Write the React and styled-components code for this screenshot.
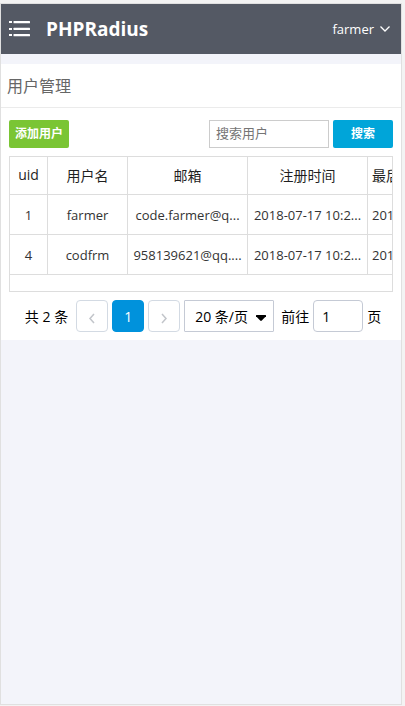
import React from "react";
import styled, { createGlobalStyle } from "styled-components";

const GlobalStyle = createGlobalStyle`
  * { box-sizing: border-box; }
  html, body { margin: 0; background: #f3f3f3; }
  body, button, input, select {
    font-family: "Open Sans", "Noto Sans CJK SC", sans-serif;
  }
  body { font-size: 14px; color: #000; }
`;

const Screen = styled.div`
  display: flex;
  flex-direction: column;
  min-height: calc(100vh - 4px);
  margin: 3px 3px 1px 0;
  border: 1px solid #e0e0e0;
  background: #f3f4fa;
`;

const Header = styled.header`
  display: flex;
  align-items: center;
  height: 50px;
  padding: 0 10px 0 8px;
  background: #545964;
  color: #fff;
`;

const IconButton = styled.button`
  display: flex;
  padding: 0;
  border: 0;
  background: none;
  color: inherit;
`;

const Brand = styled.h1`
  flex: 1;
  margin: 0 0 0 16px;
  font-size: 19px;
  line-height: 24px;
  font-weight: 700;
`;

const AccountButton = styled(IconButton)`
  align-items: center;
  gap: 5px;
  font-size: 13px;
  line-height: 20px;
`;

const Panel = styled.main`
  margin-top: 10px;
  padding-bottom: 8px;
  background: #fff;
`;

const PanelTitle = styled.h2`
  margin: 0;
  padding: 10px 6px 9px;
  border-bottom: 1px solid #ebebeb;
  color: #666;
  font-size: 16px;
  line-height: 24px;
  font-weight: 400;
`;

const Toolbar = styled.form`
  display: flex;
  gap: 4px;
  padding: 12px 8px 8px;
`;

const ActionButton = styled.button`
  width: 60px;
  height: 28px;
  padding: 0 0 2px;
  border: 0;
  border-radius: 2px;
  background: ${(p) => (p.$tone === "green" ? "#7ac534" : "#00a5d9")};
  color: #fff;
  font-size: 12px;
  font-weight: 700;
  margin-right: ${(p) => (p.$lead ? "auto" : "0")};
`;

const SearchInput = styled.input`
  width: 120px;
  height: 28px;
  padding: 0 6px 2px;
  border: 1px solid #ccc;
  background: #fff;
  font-size: 13px;
  &::placeholder { color: #757575; opacity: 1; }
`;

const TableFrame = styled.div`
  margin: 0 8px;
  padding-bottom: 16px;
  border: 1px solid #ddd;
  overflow: hidden;
`;

const Table = styled.table`
  width: 477px;
  table-layout: fixed;
  border-collapse: separate;
  border-spacing: 0;
`;

const Column = styled.col`
  width: ${(p) => p.$width}px;
`;

const cell = `
  padding: 0 4px;
  border-right: 1px solid #ddd;
  border-bottom: 1px solid #ddd;
  text-align: center;
  white-space: nowrap;
  overflow: hidden;
`;

const HeadCell = styled.th`
  ${cell}
  height: 38px;
  padding-bottom: 2px;
  color: #1f1f1f;
  font-size: 14px;
  font-weight: 400;
  text-align: ${(p) => (p.$start ? "left" : "center")};
`;

const BodyCell = styled.td`
  ${cell}
  height: 40px;
  color: #333;
  font-size: 13px;
  text-align: ${(p) => (p.$start ? "left" : "center")};
`;

const Pagination = styled.nav`
  display: flex;
  justify-content: center;
  align-items: center;
  gap: 4px;
  padding: 8px 0 0 4px;
  white-space: nowrap;
`;

const Total = styled.span`
  margin-right: 4px;
`;

const PageButton = styled.button`
  display: flex;
  align-items: center;
  justify-content: center;
  width: 32px;
  height: 32px;
  padding: 0;
  border: 1px solid ${(p) => (p.$active ? "#0092dc" : "#d3dae3")};
  border-radius: 4px;
  background: ${(p) => (p.$active ? "#0092dc" : "#fff")};
  color: ${(p) => (p.$active ? "#fff" : "#c2c5ca")};
  font-size: 14px;
  & > svg { margin-top: 4px; }
`;

const SelectBox = styled.span`
  display: grid;
  align-items: center;
  width: 90px;
  & > * { grid-area: 1 / 1; }
  & > svg { justify-self: end; margin: 3px 8px 0 0; pointer-events: none; }
`;

const PageSize = styled.select`
  width: 100%;
  height: 32px;
  padding: 0 20px 0 10px;
  appearance: none;
  border: 1px solid #c5cad5;
  border-radius: 1px;
  background: #fff;
  color: #000;
  font-size: 14px;
`;

const JumpLabel = styled.label`
  display: flex;
  align-items: center;
  gap: 4px;
  margin-left: 3px;
`;

const JumpInput = styled.input`
  width: 50px;
  height: 32px;
  padding: 0 8px;
  border: 1px solid #c5cad5;
  border-radius: 4px;
  background: #fff;
  color: #000;
  font-size: 14px;
`;

const ListIcon = () => (
  <svg width="21" height="16" viewBox="0 0 21 16" fill="currentColor" aria-hidden="true">
    <rect x="0" y="0" width="3" height="2" />
    <rect x="0" y="7" width="3" height="2" />
    <rect x="0" y="13" width="3" height="2" />
    <rect x="4.5" y="0" width="16.5" height="2.2" rx=".5" />
    <rect x="4.5" y="6.8" width="16.5" height="2.2" rx=".5" />
    <rect x="4.5" y="13" width="16.5" height="2.2" rx=".5" />
  </svg>
);

const Chevron = ({ d, width, height, stroke = 1.5 }) => (
  <svg width={width} height={height} viewBox={`0 0 ${width} ${height}`} fill="none" stroke="currentColor" strokeWidth={stroke} aria-hidden="true">
    <path d={d} />
  </svg>
);

const columns = [
  { title: "uid", width: 38 },
  { title: "用户名", width: 80 },
  { title: "邮箱", width: 120 },
  { title: "注册时间", width: 120 },
  { title: "最后登录时间", width: 119, start: true },
];

const users = [
  ["1", "farmer", "code.farmer@q...", "2018-07-17 10:2...", "2018-07-17 10:2..."],
  ["4", "codfrm", "958139621@qq....", "2018-07-17 10:2...", "2018-07-17 10:2..."],
];

export default function App() {
  return (
    <>
      <GlobalStyle />
      <Screen>
        <Header>
          <IconButton type="button" aria-label="菜单">
            <ListIcon />
          </IconButton>
          <Brand>PHPRadius</Brand>
          <AccountButton type="button">
            farmer
            <Chevron d="M1.5 1.5L6 6l4.500-4.500" width={12} height={8} stroke={1.3} />
          </AccountButton>
        </Header>
        <Panel>
          <PanelTitle>用户管理</PanelTitle>
          <Toolbar onSubmit={(e) => e.preventDefault()}>
            <ActionButton type="button" $tone="green" $lead>添加用户</ActionButton>
            <SearchInput type="text" placeholder="搜索用户" aria-label="搜索用户" />
            <ActionButton type="submit">搜索</ActionButton>
          </Toolbar>
          <TableFrame>
            <Table>
              <colgroup>
                {columns.map((c) => <Column key={c.title} $width={c.width} />)}
              </colgroup>
              <thead>
                <tr>
                  {columns.map((c) => (
                    <HeadCell key={c.title} scope="col" $start={c.start}>{c.title}</HeadCell>
                  ))}
                </tr>
              </thead>
              <tbody>
                {users.map((row) => (
                  <tr key={row[0]}>
                    {row.map((value, i) => (
                      <BodyCell key={columns[i].title} $start={columns[i].start}>{value}</BodyCell>
                    ))}
                  </tr>
                ))}
              </tbody>
            </Table>
          </TableFrame>
          <Pagination aria-label="分页">
            <Total>共 2 条</Total>
            <PageButton type="button" aria-label="上一页" disabled>
              <Chevron d="M6 1L2 5.500 6 10" width={8} height={11} />
            </PageButton>
            <PageButton type="button" $active aria-current="page">1</PageButton>
            <PageButton type="button" aria-label="下一页" disabled>
              <Chevron d="M2 1l4 4.500L2 10" width={8} height={11} />
            </PageButton>
            <SelectBox>
              <PageSize aria-label="每页条数" defaultValue="20">
                <option value="20">20 条/页</option>
              </PageSize>
              <svg width="10" height="6" viewBox="0 0 10 6" aria-hidden="true">
                <path d="M0 .5Q0 0 .5 0h9q.5 0 .5.5v.7L5.8 5.6q-.8.7-1.6 0L0 1.2z" />
              </svg>
            </SelectBox>
            <JumpLabel>
              前往
              <JumpInput type="text" defaultValue="1" />
              页
            </JumpLabel>
          </Pagination>
        </Panel>
      </Screen>
    </>
  );
}
